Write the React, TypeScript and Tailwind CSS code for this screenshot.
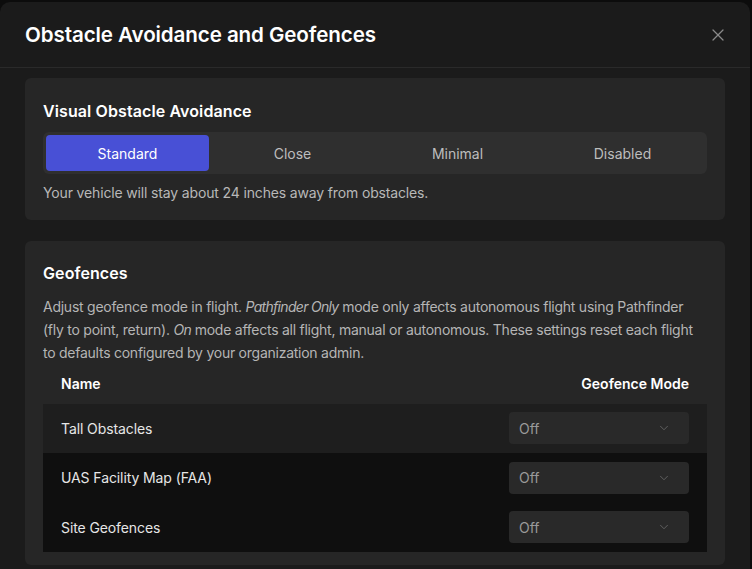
import { X, ChevronDown } from "lucide-react";

const MODES = ["Standard", "Close", "Minimal", "Disabled"] as const;

const GEOFENCES = [
  { name: "Tall Obstacles", mode: "Off", bg: "bg-[#1e1e1e]" },
  { name: "UAS Facility Map (FAA)", mode: "Off", bg: "bg-[#0f0f0f]" },
  { name: "Site Geofences", mode: "Off", bg: "bg-[#0f0f0f]" },
];

export default function App() {
  const active = "Standard";

  return (
    <div className="h-[569px] w-[752px] overflow-hidden bg-[#0c0c0c] pt-[2px] font-['Inter',sans-serif]">
      <div className="h-[600px] w-[750px] rounded-t-[10px] bg-[#1b1b1b]">
        <header className="flex h-[66px] items-center justify-between border-b border-[#2a2a2a] pl-[25px] pr-[22px]">
          <h1 className="text-[20.6px] font-semibold leading-[28px] tracking-[-0.1px] text-white">
            Obstacle Avoidance and Geofences
          </h1>
          <X className="h-[20px] w-[20px] text-[#8a8a8a]" strokeWidth={1.5} />
        </header>

        <div className="flex flex-col gap-[21px] px-[25px] pt-[10px]">
          <section className="rounded-[6px] bg-[#262626] px-[18px] pb-[17px] pt-[21px]">
            <h2 className="text-[16px] font-semibold leading-[24px] tracking-[0.1px] text-white">
              Visual Obstacle Avoidance
            </h2>
            <div className="mt-[9px] grid h-[42px] grid-cols-4 gap-[2px] rounded-[6px] bg-[#2f2f2f] p-[3px]">
              {MODES.map((mode) => (
                <button
                  key={mode}
                  type="button"
                  className={
                    mode === active
                      ? "rounded-[4px] bg-[#4850d6] text-[14px] text-white"
                      : "rounded-[4px] text-[14px] text-[#bdbdbd]"
                  }
                >
                  {mode}
                </button>
              ))}
            </div>
            <p className="mt-[9px] text-[14px] leading-[20px] tracking-[-0.15px] text-[#b8b8b8]">
              Your vehicle will stay about 24 inches away from obstacles.
            </p>
          </section>

          <section className="rounded-[6px] bg-[#262626] px-[18px] pb-[13px] pt-[20px]">
            <h2 className="text-[16px] font-semibold leading-[24px] tracking-[0.1px] text-white">
              Geofences
            </h2>
            <p className="mt-[10px] text-[14px] leading-[23px] tracking-[-0.25px] text-[#b5b5b5]">
              Adjust geofence mode in flight.{" "}
              <em className="tracking-[-0.7px]">Pathfinder Only</em> mode only
              affects autonomous flight using Pathfinder (fly to point, return).{" "}
              <em className="tracking-[-0.7px]">On</em> mode affects all flight,
              manual or autonomous. These settings reset each flight to defaults
              configured by your organization admin.
            </p>
            <div className="flex h-[39.5px] items-center justify-between px-[18px] text-[14px] font-semibold text-white">
              <span>Name</span>
              <span>Geofence Mode</span>
            </div>
            <div className="flex flex-col">
              {GEOFENCES.map((row) => (
                <div
                  key={row.name}
                  className={`flex h-[49.5px] items-center justify-between px-[18px] ${row.bg}`}
                >
                  <span className="text-[14px] tracking-[-0.1px] text-[#e6e6e6]">{row.name}</span>
                  <div className="flex h-[32px] w-[180px] items-center justify-between rounded-[4px] bg-[#292929] pl-[10px] pr-[18px]">
                    <span className="text-[14px] text-[#9a9a9a]">{row.mode}</span>
                    <ChevronDown className="h-[14px] w-[14px] text-[#707070]" strokeWidth={1.3} />
                  </div>
                </div>
              ))}
            </div>
          </section>
        </div>
      </div>
    </div>
  );
}
